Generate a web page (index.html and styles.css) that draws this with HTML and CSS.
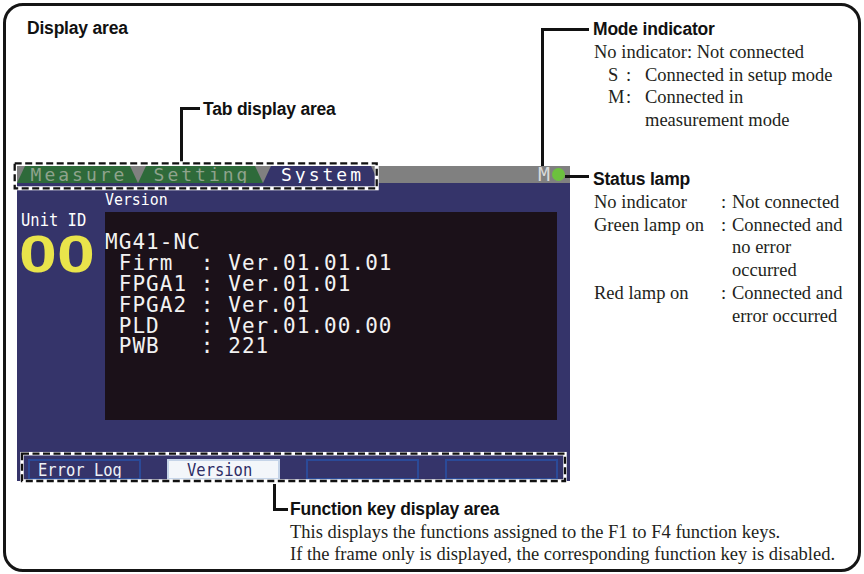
FILE: index.html
```html
<!DOCTYPE html>
<html>
<head>
<meta charset="utf-8">
<title>Display area</title>
<link rel="stylesheet" href="styles.css">
</head>
<body>
<div class="frame">
    <div class="left">
        <h1 class="title">Display area</h1>
        <h2 class="callout tab-callout">Tab display area</h2>

        <div class="screen">
            <div class="tabbar">
                <div class="tab tab-off tab-measure">Measure</div>
                <div class="tab tab-off tab-setting">Setting</div>
                <div class="tab tab-on tab-system">System</div>
                <div class="tabbar-fill"></div>
                <span class="mode">M</span>
                <span class="lamp"></span>
            </div>

            <div class="screen-main">
                <div class="unit">
                    <div class="unit-label"><span class="lcd">Unit ID</span></div>
                    <div class="unit-id">00</div>
                </div>
                <div class="info">
                    <div class="info-label"><span class="lcd">Version</span></div>
<pre class="info-panel">MG41-NC
 Firm  : Ver.01.01.01
 FPGA1 : Ver.01.01
 FPGA2 : Ver.01
 PLD   : Ver.01.00.00
 PWB   : 221</pre>
                </div>
            </div>

            <div class="fkeys">
                <div class="fkey"><span class="lcd">Error Log</span></div>
                <div class="fkey fkey-on"><span class="lcd">Version</span></div>
                <div class="fkey"></div>
                <div class="fkey"></div>
            </div>

            <!-- dashed highlight frames -->
            <svg class="dash dash-tabs" width="372" height="32" viewBox="0 0 372 32">
                <rect x="2.7" y="2.3" width="362" height="25" fill="none" stroke="#fff" stroke-width="4"/>
                <rect x="2.7" y="2.3" width="362" height="25" fill="none" stroke="#111" stroke-width="2.3" stroke-dasharray="7 3.5"/>
            </svg>
            <svg class="dash dash-keys" width="553" height="36" viewBox="0 0 553 36">
                <rect x="5" y="4.7" width="543" height="27.3" fill="none" stroke="#fff" stroke-width="3.5"/>
                <rect x="5" y="4.7" width="543" height="27.3" fill="none" stroke="#111" stroke-width="2.3" stroke-dasharray="7 3.5"/>
            </svg>
        </div>
    </div>

    <div class="right">
        <section class="mode-note">
            <h2 class="callout mode-callout">Mode indicator</h2>
            <p>No indicator: Not connected</p>
            <div class="mode-list">
                <span>S</span><span>:</span><span>Connected in setup mode</span>
                <span>M</span><span>:</span><span>Connected in<br>measurement mode</span>
            </div>
        </section>

        <section class="lamp-note">
            <h2 class="callout lamp-callout">Status lamp</h2>
            <div class="lamp-list">
                <span>No indicator</span><span>:</span><span>Not connected</span>
                <span>Green lamp on</span><span>:</span><span>Connected and<br>no error<br>occurred</span>
                <span>Red lamp on</span><span>:</span><span>Connected and<br>error occurred</span>
            </div>
        </section>
    </div>

    <section class="fk-note">
        <h2 class="callout fk-callout">Function key display area</h2>
        <p>This displays the functions assigned to the F1 to F4 function keys.</p>
        <p>If the frame only is displayed, the corresponding function key is disabled.</p>
    </section>
</div>
</body>
</html>
```

FILE: styles.css
```css
body {
  margin: 0;
  background: #fff;
}

.frame {
  box-sizing: border-box;
  width: 858px;
  height: 569px;
  margin: 3px;
  border: 3px solid #151515;
  border-radius: 20px;
  display: grid;
  grid-template-columns: 587px 1fr;
  grid-template-rows: 475px auto;
  font-family: "Liberation Serif", serif;
  font-size: 18.5px;
  line-height: 22.7px;
  color: #231f20;
}

h1, h2, p {
  margin: 0;
}

.title, .callout {
  font-family: "Liberation Sans", Arial, sans-serif;
  font-weight: bold;
  font-size: 17.5px;
  line-height: 22.7px;
  letter-spacing: -0.2px;
  color: #111;
}

.callout {
  position: relative;
}

.callout::before, .callout::after {
  content: "";
  position: absolute;
  background: #111;
}

/* left column */
.title {
  margin: 10.6px 0 0 21px;
}

.tab-callout {
  margin: 58.7px 0 0 197px;
}

.tab-callout::before {
  left: -22.7px;
  top: 8.8px;
  width: 19.7px;
  height: 3px;
}

.tab-callout::after {
  left: -22.7px;
  top: 8.8px;
  width: 3px;
  height: 56px;
}

/* device screen */
.screen {
  position: relative;
  width: 553px;
  height: 315px;
  margin: 45.3px 0 0 11px;
  background: #35346a;
  display: flex;
  flex-direction: column;
}

.tabbar {
  display: flex;
  align-items: center;
  height: 17px;
  background: #808080;
}

.tab {
  box-sizing: border-box;
  height: 17px;
  padding-top: 1px;
  text-align: center;
  text-indent: 3px;
  font-family: "DejaVu Sans Mono", monospace;
  font-size: 18px;
  line-height: 16px;
  letter-spacing: 3px;
  clip-path: polygon(8px 0, calc(100% - 8px) 0, 100% 100%, 0 100%);
}

.tab-measure { width: 121px; }
.tab-setting { width: 125px; }
.tab-system  { width: 116px; }

.tab-off {
  background: #2e6a3a;
  color: #8fa38d;
}

.tab-on {
  background: #35346a;
  color: #fff;
}

.tabbar-fill {
  flex: 1;
}

.mode {
  font-family: "DejaVu Sans Mono", monospace;
  font-size: 20px;
  line-height: 17px;
  color: #dadada;
}

.lamp {
  width: 13px;
  height: 13px;
  margin: 0 5px 0 2px;
  border-radius: 50%;
  background: #6cc13e;
}

.screen-main {
  display: grid;
  grid-template-columns: 88px 452px;
  padding-top: 6px;
}

.lcd {
  display: inline-block;
  font-family: "DejaVu Sans Mono", monospace;
  transform-origin: left center;
}

.unit {
  padding-top: 21px;
}

.unit-label {
  margin-left: 4px;
  line-height: 20px;
  color: #fff;
}

.unit-label .lcd {
  font-size: 17px;
  transform: scaleX(.91);
}

.unit-id {
  display: inline-block;
  margin: 6.5px 0 0 2px;
  font-family: "Liberation Sans", Arial, sans-serif;
  font-weight: bold;
  font-size: 52px;
  line-height: 36px;
  color: #e9e44b;
  transform: scaleX(1.31);
  transform-origin: left top;
}

.info-label {
  height: 20px;
  line-height: 20px;
  color: #fff;
}

.info-label .lcd {
  font-size: 16.5px;
  transform: scaleX(.9);
}

.info-panel {
  box-sizing: border-box;
  height: 208px;
  margin: 3px 0 0;
  padding-top: 20.4px;
  background: #1b1119;
  color: #f2f2f2;
  font-family: "DejaVu Sans Mono", monospace;
  font-size: 21px;
  line-height: 20.8px;
  letter-spacing: 1.05px;
}

.fkeys {
  display: flex;
  gap: 26px;
  margin-top: 39px;
  padding: 0 11px 1px;
}

.fkey {
  flex: none;
  box-sizing: border-box;
  width: 113px;
  height: 21px;
  overflow: hidden;
  border: 2px solid #2b4a98;
  color: #eef2f7;
  line-height: 18px;
  padding-left: 8px;
  white-space: nowrap;
}

.fkey .lcd {
  font-size: 18px;
  transform: scaleX(.86);
}

.fkey-on {
  background: #f3f6fa;
  border-color: #c5d4e8;
  color: #2d2d66;
  padding-left: 18px;
}

.dash {
  position: absolute;
}

.dash-tabs {
  left: -5px;
  top: -5px;
}

.dash-keys {
  left: 0;
  top: 283px;
}

/* right column notes */
.right {
  padding-top: 12.3px;
}

.mode-callout::before {
  left: -52px;
  top: 9.5px;
  width: 48px;
  height: 3px;
}

.mode-callout::after {
  left: -52px;
  top: 9.5px;
  width: 3px;
  height: 138px;
}

.mode-note p {
  margin-left: 1px;
}

.mode-list {
  display: grid;
  grid-template-columns: 18px 19px 1fr;
  margin-left: 15px;
}

.lamp-note {
  margin-top: 36.5px;
}

.lamp-callout::before {
  left: -28px;
  top: 6.9px;
  width: 24px;
  height: 3px;
}

.lamp-list {
  display: grid;
  grid-template-columns: 127px 11px 1fr;
  margin-left: 1px;
}

/* bottom note */
.fk-note {
  grid-column: 1 / -1;
  margin: 17px 0 0 284px;
}

.fk-callout::before {
  left: -17.5px;
  top: -14px;
  width: 3px;
  height: 26.5px;
}

.fk-callout::after {
  left: -17.5px;
  top: 9.5px;
  width: 15px;
  height: 3px;
}
```
